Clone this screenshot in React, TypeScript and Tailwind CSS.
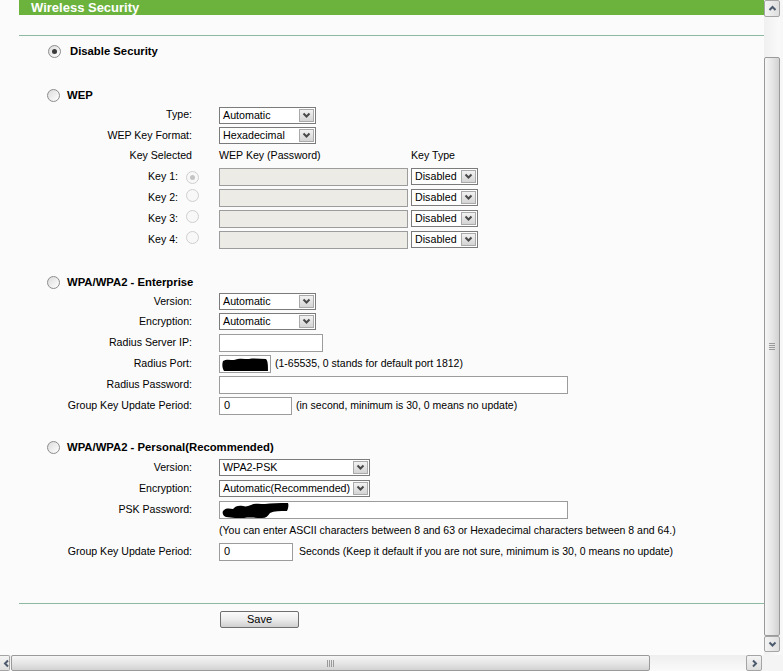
import React from "react";

function Radio({ checked = false, disabled = false }: { checked?: boolean; disabled?: boolean }) {
  return (
    <span
      className={
        disabled
          ? "inline-flex w-[13px] h-[13px] shrink-0 items-center justify-center rounded-full border border-[#cfcfcf] bg-[#f8f8f8]"
          : "inline-flex w-[13px] h-[13px] shrink-0 items-center justify-center rounded-full border border-[#8c8c8c] bg-gradient-to-br from-[#dcdcdc] to-[#ffffff]"
      }
    >
      {checked && (
        <span
          className={
            disabled ? "w-[5px] h-[5px] rounded-full bg-[#c4c4c4]" : "w-[5px] h-[5px] rounded-full bg-[#3a3a3a]"
          }
        />
      )}
    </span>
  );
}

function Chevron({ dir = "down", color = "#4a4a4a" }: { dir?: "down" | "up" | "left" | "right"; color?: string }) {
  const pts =
    dir === "down"
      ? "1.5,2.5 4.5,5.5 7.5,2.5"
      : dir === "up"
      ? "1.5,6 4.5,3 7.5,6"
      : dir === "left"
      ? "6,1.5 3,4.5 6,7.5"
      : "3,1.5 6,4.5 3,7.5";
  return (
    <svg width="9" height="9" viewBox="0 0 9 9">
      <polyline points={pts} fill="none" stroke={color} strokeWidth="2" />
    </svg>
  );
}

function Select({ value, w }: { value: string; w: string }) {
  return (
    <div className={`${w} h-[17px] flex items-stretch border border-[#7b7b7b] bg-white`}>
      <div className="flex-1 pl-[3px] text-[10.7px] leading-[15px] whitespace-nowrap overflow-hidden">{value}</div>
      <div className="w-[15px] m-px flex items-center justify-center border border-[#a9a9a9] bg-gradient-to-b from-[#f2f2f2] to-[#d4d4d4]">
        <Chevron />
      </div>
    </div>
  );
}

function Box({ w, disabled = false, children }: { w: string; disabled?: boolean; children?: React.ReactNode }) {
  return (
    <div
      className={`${w} h-[18px] relative flex items-center border border-[#9c9c9c] ${
        disabled ? "bg-[#ecebe5]" : "bg-white"
      } text-[11px] pl-[4px] overflow-hidden`}
    >
      {children}
    </div>
  );
}

function Row({
  label,
  h = "h-[21px]",
  children,
}: {
  label?: React.ReactNode;
  h?: string;
  children?: React.ReactNode;
}) {
  return (
    <div className={`${h} flex items-center`}>
      <div className="w-[180px] shrink-0 flex items-center justify-end pr-[7px] text-[10.6px] whitespace-nowrap">
        {label}
      </div>
      <div className="ml-[20px] flex items-center text-[10.5px]">{children}</div>
    </div>
  );
}

function KeyRow({ n, first = false }: { n: number; first?: boolean }) {
  return (
    <div className="h-[21px] flex items-center">
      <div className="w-[180px] shrink-0 flex items-center justify-end text-[10.6px]">
        <span>Key {n}:</span>
        <span className="ml-[8px]">
          <Radio disabled checked={first} />
        </span>
      </div>
      <div className="ml-[20px] flex items-center">
        <Box w="w-[189px]" disabled />
        <div className="ml-[3px]">
          <Select value="Disabled" w="w-[67px]" />
        </div>
      </div>
    </div>
  );
}

function SectionHead({ title, className }: { title: string; className: string }) {
  return (
    <div className={`${className} h-[19px] flex items-center pl-[28px]`}>
      <Radio />
      <span className="ml-[7px] font-bold text-[11.3px]">{title}</span>
    </div>
  );
}

function VScroll() {
  return (
    <div className="w-[19px] h-full flex pr-[3px] bg-[#f7f7f7]">
      <div className="w-[16px] h-full flex flex-col bg-gradient-to-r from-[#f0f0f0] to-[#fafafa]">
        <div className="h-[17px] flex items-center justify-center rounded-[2px] border border-[#a4a4a4] bg-gradient-to-r from-[#f4f4f4] to-[#dedede]">
          <Chevron dir="up" color="#4d5a6e" />
        </div>
        <div className="h-[40px]" />
        <div className="h-[579px] flex items-center justify-center rounded-[2px] border border-[#9a9a9a] bg-gradient-to-r from-[#f6f6f6] via-[#e6e6e6] to-[#d2d2d2]">
          <div className="flex flex-col gap-[1px]">
            <div className="w-[6px] h-px bg-[#9a9a9a]" />
            <div className="w-[6px] h-px bg-[#9a9a9a]" />
            <div className="w-[6px] h-px bg-[#9a9a9a]" />
            <div className="w-[6px] h-px bg-[#9a9a9a]" />
          </div>
        </div>
        <div className="h-[16px] flex items-center justify-center rounded-[2px] border border-[#a4a4a4] bg-gradient-to-r from-[#f4f4f4] to-[#dedede]">
          <Chevron dir="down" color="#4d5a6e" />
        </div>
      </div>
    </div>
  );
}

function HScroll() {
  return (
    <div className="h-[16px] flex bg-gradient-to-b from-[#eeeeee] to-[#fafafa]">
      <div className="w-[10px] h-full flex items-center justify-end overflow-hidden rounded-r-[2px] border border-l-0 border-[#a4a4a4] bg-gradient-to-b from-[#f4f4f4] to-[#dedede]">
        <div className="-mr-[2px]">
          <Chevron dir="left" color="#4d5a6e" />
        </div>
      </div>
      <div className="ml-px w-[639px] h-full flex items-center justify-center rounded-[2px] border border-[#9a9a9a] bg-gradient-to-b from-[#f6f6f6] via-[#e6e6e6] to-[#d2d2d2]">
        <div className="flex gap-[1px]">
          <div className="w-px h-[7px] bg-[#9a9a9a]" />
          <div className="w-px h-[7px] bg-[#9a9a9a]" />
          <div className="w-px h-[7px] bg-[#9a9a9a]" />
          <div className="w-px h-[7px] bg-[#9a9a9a]" />
        </div>
      </div>
      <div className="w-[96px]" />
      <div className="w-[16px] h-full flex items-center justify-center rounded-[2px] border border-[#a4a4a4] bg-gradient-to-b from-[#f4f4f4] to-[#dedede]">
        <Chevron dir="right" color="#4d5a6e" />
      </div>
      <div className="flex-1 bg-[#f4f4f4]" />
    </div>
  );
}

export default function App() {
  return (
    <div className="w-[783px] h-[671px] overflow-hidden flex flex-col bg-[#fbfbfb] text-black font-['Liberation_Sans',Arial,sans-serif]">
      <div className="h-[655px] flex">
        <div className="w-[764px] pl-[19px] flex flex-col">
          <div className="h-[15px] shrink-0 bg-[#6cb33e] pl-[12px] text-white font-bold text-[13px] leading-[15px]">
            Wireless Security
          </div>
          <div className="mt-[20px] h-px shrink-0 bg-[#8cb9a0]" />

          <div className="mt-[5px] h-[21px] flex items-center pl-[29px]">
            <Radio checked />
            <span className="ml-[9px] font-bold text-[11.3px]">Disable Security</span>
          </div>

          <SectionHead className="mt-[24px]" title="WEP" />
          <Row label="Type:" h="h-[20px]">
            <Select value="Automatic" w="w-[97px]" />
          </Row>
          <Row label="WEP Key Format:">
            <Select value="Hexadecimal" w="w-[97px]" />
          </Row>
          <div className="h-[20px] flex items-center text-[10.6px]">
            <div className="w-[180px] shrink-0 text-right pr-[7px]">Key Selected</div>
            <div className="ml-[20px] w-[192px]">WEP Key (Password)</div>
            <div>Key Type</div>
          </div>
          <KeyRow n={1} first />
          <KeyRow n={2} />
          <KeyRow n={3} />
          <KeyRow n={4} />

          <SectionHead className="mt-[23px]" title="WPA/WPA2 - Enterprise" />
          <Row label="Version:" h="h-[19px]">
            <Select value="Automatic" w="w-[97px]" />
          </Row>
          <Row label="Encryption:">
            <Select value="Automatic" w="w-[97px]" />
          </Row>
          <Row label="Radius Server IP:">
            <Box w="w-[104px]" />
          </Row>
          <Row label="Radius Port:">
            <Box w="w-[52px]">
              <svg className="absolute left-[2px] top-[1px]" width="47" height="15" viewBox="0 0 47 15">
                <path
                  d="M1 4 C4 2 8 3 12 3 C17 1 22 2 27 2 C32 1 38 2 44 2 C46 4 46 9 46 14 L2 14 C0 11 0 7 1 4 Z"
                  fill="#000"
                />
              </svg>
            </Box>
            <span className="ml-[4px]">(1-65535, 0 stands for default port 1812)</span>
          </Row>
          <Row label="Radius Password:">
            <Box w="w-[349px]" />
          </Row>
          <Row label="Group Key Update Period:">
            <Box w="w-[73px]">0</Box>
            <span className="ml-[4px]">(in second, minimum is 30, 0 means no update)</span>
          </Row>

          <SectionHead className="mt-[22px]" title="WPA/WPA2 - Personal(Recommended)" />
          <Row label="Version:">
            <Select value="WPA2-PSK" w="w-[151px]" />
          </Row>
          <Row label="Encryption:">
            <Select value="Automatic(Recommended)" w="w-[151px]" />
          </Row>
          <Row label="PSK Password:">
            <Box w="w-[349px]">
              <svg className="absolute left-[2px] top-0" width="68" height="17" viewBox="0 0 68 17">
                <path
                  d="M1 9 C3 6 7 6 11 7 C13 4 17 3 21 4 C24 5 26 4 29 3 C33 1 39 2 43 2 C49 1 57 1 66 1 C67 4 66 7 65 9 C58 9 52 9 48 11 C46 14 44 16 40 16 C34 16 28 15 22 16 C16 16 10 16 4 15 C1 14 0 11 1 9 Z"
                  fill="#000"
                />
              </svg>
            </Box>
          </Row>
          <Row>
            <span className="whitespace-nowrap">
              (You can enter ASCII characters between 8 and 63 or Hexadecimal characters between 8 and 64.)
            </span>
          </Row>
          <Row label="Group Key Update Period:">
            <Box w="w-[74px]">0</Box>
            <span className="ml-[6px] whitespace-nowrap">
              Seconds (Keep it default if you are not sure, minimum is 30, 0 means no update)
            </span>
          </Row>

          <div className="mt-[41px] h-px shrink-0 bg-[#8cb9a0]" />
          <div className="mt-[7px] ml-[201px]">
            <div className="w-[79px] h-[17px] flex items-center justify-center rounded-[2px] border border-[#6f6f6f] bg-gradient-to-b from-[#fbfbfb] via-[#ececec] to-[#cfcfcf] text-[11px]">
              Save
            </div>
          </div>
        </div>
        <VScroll />
      </div>
      <HScroll />
    </div>
  );
}
